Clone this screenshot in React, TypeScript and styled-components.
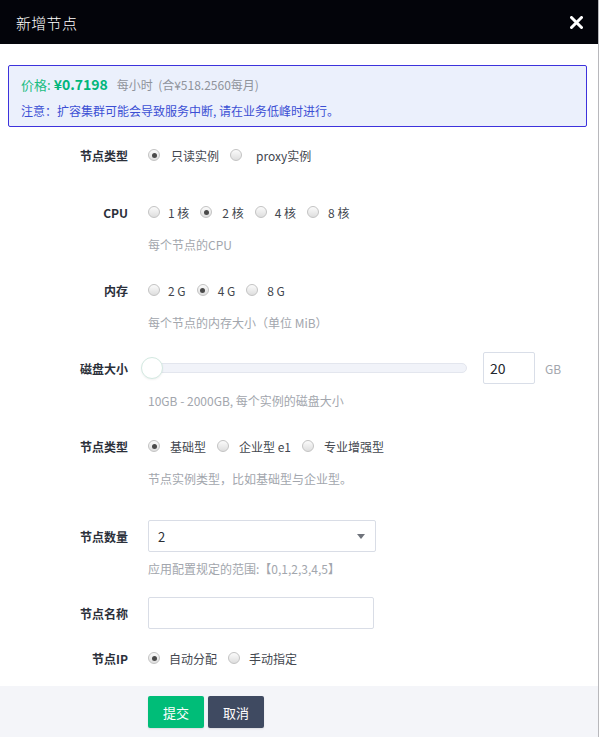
import React from "react";
import styled, { createGlobalStyle } from "styled-components";

const Global = createGlobalStyle`
  html, body { margin: 0; padding: 0; background: #fff; }
  body { font-family: "Noto Sans CJK SC", "Noto Sans", sans-serif; }
  * { box-sizing: border-box; }
`;

const Dialog = styled.div`
  width: 599px;
  height: 737px;
  border-right: 1px solid #b8b8bc;
  background: #fff;
  display: flex;
  flex-direction: column;
  overflow: hidden;
`;

const Header = styled.div`
  height: 44px;
  flex: none;
  background: #03040a;
  display: flex;
  align-items: center;
  justify-content: space-between;
  padding: 0 14px 0 16px;
`;

const Title = styled.div`
  color: #fff;
  font-size: 15px;
  font-weight: 300;
  letter-spacing: 0.3px;
`;

const CloseBtn = styled.div`
  width: 16px;
  height: 16px;
  display: flex;
  align-items: center;
  justify-content: center;
`;

const Body = styled.div`
  flex: 1;
  padding: 21px 11px 0 8px;
`;

const Alert = styled.div`
  height: 62px;
  border: 1px solid #3d32dc;
  border-radius: 2px;
  background: #ebf0fc;
  padding: 8px 12px 0 12px;
  display: flex;
  flex-direction: column;
  gap: 5px;
  margin-bottom: 12px;
`;

const PriceLine = styled.div`
  display: flex;
  align-items: baseline;
  height: 22px;
  font-size: 12px;
  color: #8f939b;
`;

const PriceLabel = styled.span`
  color: #1cbd82;
  font-size: 13px;
  margin-right: 3px;
`;

const PriceValue = styled.span`
  color: #00b67a;
  font-size: 14px;
  font-weight: 700;
  margin-right: 9px;
`;

const Note = styled.div`
  font-size: 12px;
  color: #3b4fd4;
  line-height: 20px;
`;

const Item = styled.div<{ $mb: number }>`
  display: grid;
  grid-template-columns: 120px 1fr;
  column-gap: 20px;
  margin-bottom: ${(p) => p.$mb}px;
`;

const Label = styled.div`
  height: 32px;
  display: flex;
  align-items: center;
  justify-content: flex-end;
  font-size: 12px;
  font-weight: 700;
  color: #2b303a;
`;

const Control = styled.div`
  height: 32px;
  display: flex;
  align-items: center;
`;

const Hint = styled.div`
  grid-column: 2;
  margin-top: 7px;
  height: 20px;
  line-height: 20px;
  font-size: 12px;
  color: #a2a6ad;
`;

const Option = styled.label<{ $gap: number }>`
  display: inline-flex;
  align-items: center;
  gap: ${(p) => p.$gap}px;
  margin-right: 11px;
  font-size: 12px;
  color: #43474f;
`;

const RadioDot = styled.span<{ $checked: boolean }>`
  width: 12px;
  height: 12px;
  border-radius: 50%;
  border: 1px solid #c3c3c3;
  background: linear-gradient(#fbfbfb, #dedede);
  display: inline-flex;
  align-items: center;
  justify-content: center;
  flex: none;
  &::after {
    content: "";
    width: 5px;
    height: 5px;
    border-radius: 50%;
    background: #4a4a4a;
    display: ${(p) => (p.$checked ? "block" : "none")};
  }
`;

const SliderWrap = styled.div`
  display: flex;
  align-items: center;
  width: 100%;
`;

const Track = styled.div`
  position: relative;
  width: 319px;
  height: 10px;
  border: 1px solid #e3e6ee;
  border-radius: 5px;
  background: #f1f3f9;
`;

const Thumb = styled.div`
  position: absolute;
  left: -8px;
  top: 50%;
  transform: translateY(-50%);
  width: 22px;
  height: 22px;
  border-radius: 50%;
  background: #fff;
  border: 1.5px solid #d3e9e1;
  box-shadow: 0 1px 2px rgba(0, 0, 0, 0.06);
`;

const NumBox = styled.div`
  width: 52px;
  height: 32px;
  margin-left: 16px;
  border: 1px solid #d9dee8;
  border-radius: 2px;
  display: flex;
  align-items: center;
  padding-left: 6px;
  font-size: 14px;
  color: #23272e;
`;

const Unit = styled.span`
  margin-left: 10px;
  font-size: 12px;
  color: #a2a6ad;
`;

const Field = styled.div<{ $w: number }>`
  width: ${(p) => p.$w}px;
  height: 32px;
  border: 1px solid #d9dde6;
  border-radius: 2px;
  display: flex;
  align-items: center;
  justify-content: space-between;
  padding: 0 10px 0 9px;
  font-size: 13px;
  color: #2b2f36;
  background: #fff;
`;

const Caret = styled.span`
  width: 0;
  height: 0;
  border-left: 4px solid transparent;
  border-right: 4px solid transparent;
  border-top: 5px solid #6f737b;
`;

const Footer = styled.div`
  height: 51px;
  flex: none;
  background: #f4f5f9;
  display: flex;
  gap: 4px;
  padding: 10px 0 0 148px;
`;

const Button = styled.button<{ $bg: string }>`
  width: 56px;
  height: 32px;
  border: none;
  border-radius: 2px;
  background: ${(p) => p.$bg};
  color: #fff;
  font-family: inherit;
  font-size: 13px;
  box-shadow: 0 1px 2px rgba(0, 0, 0, 0.1);
`;

type Opt = { text: string; checked?: boolean; gap?: number };

const Radios = ({ opts }: { opts: Opt[] }) => (
  <>
    {opts.map((o) => (
      <Option key={o.text} $gap={o.gap ?? 9}>
        <RadioDot $checked={!!o.checked} />
        {o.text}
      </Option>
    ))}
  </>
);

export default function App() {
  return (
    <>
      <Global />
      <Dialog>
        <Header>
          <Title>新增节点</Title>
          <CloseBtn>
            <svg width="13" height="13" viewBox="0 0 13 13">
              <path d="M1.5 1.5 L11.5 11.5 M11.5 1.5 L1.5 11.5" stroke="#fff" strokeWidth="3" strokeLinecap="round" />
            </svg>
          </CloseBtn>
        </Header>
        <Body>
          <Alert>
            <PriceLine>
              <PriceLabel>价格:</PriceLabel>
              <PriceValue>¥0.7198</PriceValue>
              每小时&nbsp;&nbsp;(合¥518.2560每月)
            </PriceLine>
            <Note>注意：扩容集群可能会导致服务中断, 请在业务低峰时进行。</Note>
          </Alert>

          <Item $mb={25}>
            <Label>节点类型</Label>
            <Control>
              <Radios opts={[{ text: "只读实例", checked: true, gap: 11 }, { text: "proxy实例", gap: 14 }]} />
            </Control>
          </Item>

          <Item $mb={19}>
            <Label>CPU</Label>
            <Control>
              <Radios opts={[{ text: "1 核", gap: 8 }, { text: "2 核", checked: true, gap: 10 }, { text: "4 核", gap: 8 }, { text: "8 核", gap: 9 }]} />
            </Control>
            <Hint>每个节点的CPU</Hint>
          </Item>

          <Item $mb={19}>
            <Label>内存</Label>
            <Control>
              <Radios opts={[{ text: "2 G", gap: 8 }, { text: "4 G", checked: true, gap: 9 }, { text: "8 G", gap: 9 }]} />
            </Control>
            <Hint>每个节点的内存大小（单位 MiB）</Hint>
          </Item>

          <Item $mb={19}>
            <Label>磁盘大小</Label>
            <Control>
              <SliderWrap>
                <Track>
                  <Thumb />
                </Track>
                <NumBox>20</NumBox>
                <Unit>GB</Unit>
              </SliderWrap>
            </Control>
            <Hint>10GB - 2000GB, 每个实例的磁盘大小</Hint>
          </Item>

          <Item $mb={31}>
            <Label>节点类型</Label>
            <Control>
              <Radios opts={[{ text: "基础型", checked: true, gap: 10 }, { text: "企业型 e1", gap: 10 }, { text: "专业增强型", gap: 10 }]} />
            </Control>
            <Hint>节点实例类型，比如基础型与企业型。</Hint>
          </Item>

          <Item $mb={18}>
            <Label>节点数量</Label>
            <Control>
              <Field $w={228}>
                2
                <Caret />
              </Field>
            </Control>
            <Hint>应用配置规定的范围:【0,1,2,3,4,5】</Hint>
          </Item>

          <Item $mb={13}>
            <Label>节点名称</Label>
            <Control>
              <Field $w={226} />
            </Control>
          </Item>

          <Item $mb={0}>
            <Label>节点IP</Label>
            <Control>
              <Radios opts={[{ text: "自动分配", checked: true, gap: 9 }, { text: "手动指定", gap: 9 }]} />
            </Control>
          </Item>
        </Body>
        <Footer>
          <Button $bg="#00bd78">提交</Button>
          <Button $bg="#3f4a61">取消</Button>
        </Footer>
      </Dialog>
    </>
  );
}
